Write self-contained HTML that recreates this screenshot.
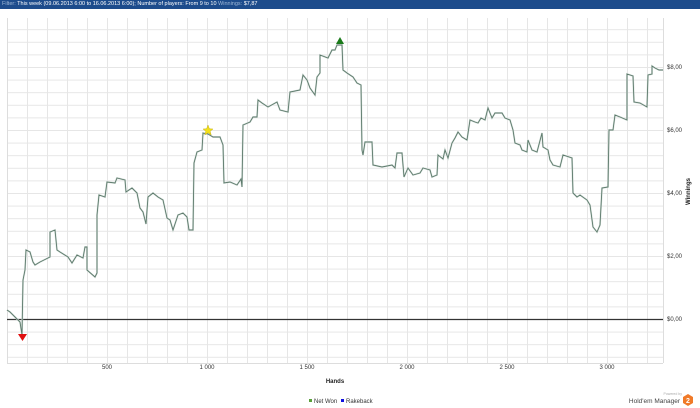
<!DOCTYPE html>
<html><head><style>
body{margin:0;width:700px;height:408px;background:#fff;position:relative;overflow:hidden;font-family:"Liberation Sans",sans-serif;}
.hdr{position:absolute;left:0;top:0;width:700px;height:9px;background:#1d4c8c;color:#fff;font-size:5.5px;line-height:9px;padding-left:2px;white-space:nowrap}
.hdr span{color:#9fb8d8}
</style></head><body>
<div class="hdr"><span>Filter:</span> This week (09.06.2013 6:00 to 16.06.2013 6:00); Number of players: From 9 to 10 <span>Winnings:</span> $7,87</div>
<svg width="700" height="408" style="position:absolute;left:0;top:0">
<defs>
<pattern id="gx" x="7" y="0" width="20" height="408" patternUnits="userSpaceOnUse"><line x1="0.5" y1="0" x2="0.5" y2="408" stroke="#e6e6e6" stroke-width="1"/></pattern>
<pattern id="gy" x="0" y="319" width="700" height="12.6" patternUnits="userSpaceOnUse"><line x1="0" y1="0.5" x2="700" y2="0.5" stroke="#e6e6e6" stroke-width="1"/></pattern>
</defs>
<rect x="7" y="18" width="656" height="345" fill="url(#gx)"/>
<rect x="7" y="18" width="656" height="345" fill="url(#gy)"/>
<line x1="7.5" y1="18" x2="7.5" y2="363" stroke="#ddd"/>
<line x1="663.5" y1="18" x2="663.5" y2="363" stroke="#ddd"/>
<line x1="7" y1="363.5" x2="663" y2="363.5" stroke="#ddd"/>
<line x1="7" y1="319.5" x2="663" y2="319.5" stroke="#333" stroke-width="1.3"/>
<polyline id="ln" fill="none" stroke="#d6e0db" stroke-width="1.8" points="7,310 10,312 14,316 18,320 20,322 22,335 23,280 25,270 26,250 30,252 33,262 35,265 40,262 48,258 50,257 50,232 55,230 57,250 60,252 68,257 72,263 77,255 83,258 85,247 87,247 87,270 95,277 97,273 97,215 99,195 105,197 107,182 115,183 117,178 125,180 126,192 132,188 137,193 140,208 143,212 146,224 148,197 153,193 158,197 163,200 167,218 170,220 173,230 178,215 183,213 187,217 189,230 193,230 194,163 197,152 202,150 203,133 208,134 213,137 220,137 223,145 224,183 230,182 237,185 241,179 242,187 243,125 250,122 253,117 257,117 258,100 262,103 268,107 277,102 280,110 288,112 290,92 300,90 303,75 307,80 310,88 315,95 317,77 320,73 320,55 328,58 332,50 335,50 337,45 342,45 343,70 347,73 353,77 357,83 361,85 362,150 363,155 365,142 372,142 373,165 382,167 392,165 395,168 397,153 402,153 404,177 408,168 413,175 420,173 423,168 430,170 432,177 437,175 438,155 443,159 445,150 448,158 452,143 455,138 458,132 462,137 467,140 470,120 475,122 478,123 481,118 485,120 488,108 492,118 495,113 502,113 505,118 510,120 513,130 515,143 520,145 522,150 527,152 528,140 532,150 537,152 542,133 543,147 548,150 550,160 553,165 560,167 563,155 572,158 573,193 577,197 580,195 587,200 590,205 593,227 597,232 600,225 602,188 608,187 609,130 613,130 615,115 620,117 627,120 627,74 633,76 634,102 640,103 647,107 648,75 652,74 652,66 655,68 659,70 663,70"/>
<polyline fill="none" stroke="#5d7a6c" stroke-width="0.9" points="7,310 10,312 14,316 18,320 20,322 22,335 23,280 25,270 26,250 30,252 33,262 35,265 40,262 48,258 50,257 50,232 55,230 57,250 60,252 68,257 72,263 77,255 83,258 85,247 87,247 87,270 95,277 97,273 97,215 99,195 105,197 107,182 115,183 117,178 125,180 126,192 132,188 137,193 140,208 143,212 146,224 148,197 153,193 158,197 163,200 167,218 170,220 173,230 178,215 183,213 187,217 189,230 193,230 194,163 197,152 202,150 203,133 208,134 213,137 220,137 223,145 224,183 230,182 237,185 241,179 242,187 243,125 250,122 253,117 257,117 258,100 262,103 268,107 277,102 280,110 288,112 290,92 300,90 303,75 307,80 310,88 315,95 317,77 320,73 320,55 328,58 332,50 335,50 337,45 342,45 343,70 347,73 353,77 357,83 361,85 362,150 363,155 365,142 372,142 373,165 382,167 392,165 395,168 397,153 402,153 404,177 408,168 413,175 420,173 423,168 430,170 432,177 437,175 438,155 443,159 445,150 448,158 452,143 455,138 458,132 462,137 467,140 470,120 475,122 478,123 481,118 485,120 488,108 492,118 495,113 502,113 505,118 510,120 513,130 515,143 520,145 522,150 527,152 528,140 532,150 537,152 542,133 543,147 548,150 550,160 553,165 560,167 563,155 572,158 573,193 577,197 580,195 587,200 590,205 593,227 597,232 600,225 602,188 608,187 609,130 613,130 615,115 620,117 627,120 627,74 633,76 634,102 640,103 647,107 648,75 652,74 652,66 655,68 659,70 663,70"/>
<polygon points="18,334 27,334 22.5,341" fill="#e01010"/>
<polygon points="336,44 344,44 340,37" fill="#1a7a1a"/>
<polygon points="208,125 209.4,128.8 213,129 210.2,131.3 211.2,135 208,132.8 204.8,135 205.8,131.3 203,129 206.6,128.8" fill="#f3e01a" stroke="#b9a400" stroke-width="0.4"/>
<text x="667" y="69" font-size="6" fill="#333" font-family="Liberation Sans">$8,00</text>
<text x="667" y="132" font-size="6" fill="#333" font-family="Liberation Sans">$6,00</text>
<text x="667" y="195" font-size="6" fill="#333" font-family="Liberation Sans">$4,00</text>
<text x="667" y="258" font-size="6" fill="#333" font-family="Liberation Sans">$2,00</text>
<text x="667" y="321" font-size="6" fill="#333" font-family="Liberation Sans">$0,00</text>
<text transform="translate(690,205) rotate(-90)" font-size="6" font-weight="bold" fill="#222" font-family="Liberation Sans">Winnings</text>
<g font-size="6" fill="#333" font-family="Liberation Sans" text-anchor="middle">
<text x="107" y="369">500</text><text x="207" y="369">1 000</text><text x="307" y="369">1 500</text><text x="407" y="369">2 000</text><text x="507" y="369">2 500</text><text x="607" y="369">3 000</text>
</g>
<text x="335" y="383" font-size="6" font-weight="bold" fill="#222" font-family="Liberation Sans" text-anchor="middle">Hands</text>
<rect x="309" y="399" width="3" height="3" fill="#5aa03a"/>
<text x="314" y="403" font-size="6" fill="#333" font-family="Liberation Sans">Net Won</text>
<rect x="341" y="399" width="3" height="3" fill="#1010e0"/>
<text x="346" y="403" font-size="6" fill="#333" font-family="Liberation Sans">Rakeback</text>
<text x="682" y="395" font-size="3.5" fill="#aaa" font-family="Liberation Sans" text-anchor="end">Powered by</text>
<text x="680" y="403" font-size="6.5" fill="#444" font-family="Liberation Sans" text-anchor="end">Hold'em Manager</text>
<polygon points="688,394 693,397 693,403 688,406 683,403 683,397" fill="#f07a28"/>
<text x="688" y="403" font-size="7" font-weight="bold" fill="#fff" font-family="Liberation Sans" text-anchor="middle">2</text>
</svg>
</body></html>
